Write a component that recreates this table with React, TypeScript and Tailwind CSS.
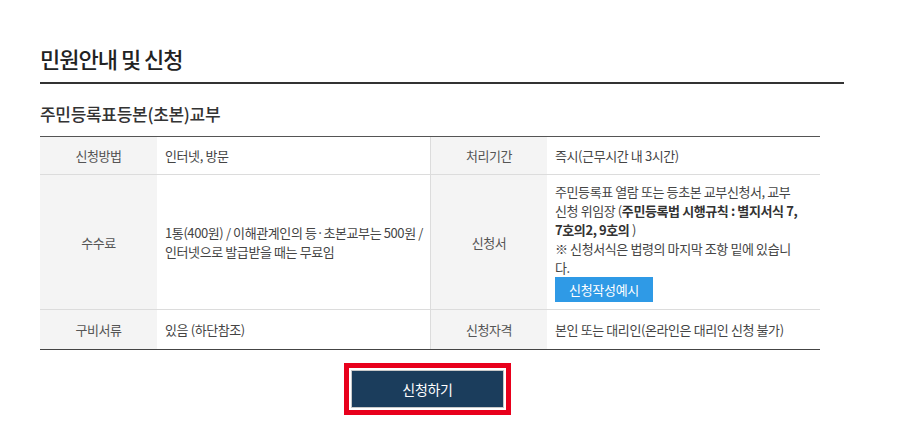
export default function App() {
  const font = { fontFamily: '"Noto Sans CJK KR", "Noto Sans", sans-serif' };
  return (
    <div className="w-[897px] h-[434px] bg-white text-[#444]" style={font}>
      <div className="ml-[40px] w-[804px] pt-[42px]">
        {/* section title */}
        <h2 className="text-[22px] leading-[32px] font-medium text-[#222] tracking-[-1px] pb-[8px] border-b-2 border-[#333]">
          민원안내 및 신청
        </h2>

        <h3 className="mt-[18px] text-[17px] leading-[24px] font-medium text-[#333] tracking-[-0.3px]">
          주민등록표등본(초본)교부
        </h3>

        {/* info table */}
        <div className="mt-[10px] w-[780px] border-t border-[#555] text-[13px] leading-[19px] tracking-[-0.4px]">
          <div className="grid grid-cols-[117px_273px_117px_273px] border-b border-[#dcdcdc]">
            <div className="bg-[#f4f4f4] flex items-center justify-center py-[9px] text-[#555]">신청방법</div>
            <div className="flex items-center px-2 py-[9px]">인터넷, 방문</div>
            <div className="bg-[#f4f4f4] border-l border-[#dcdcdc] flex items-center justify-center py-[9px] text-[#555]">처리기간</div>
            <div className="flex items-center px-2 py-[9px]">즉시(근무시간 내 3시간)</div>
          </div>

          <div className="grid grid-cols-[117px_273px_117px_273px] border-b border-[#dcdcdc]">
            <div className="bg-[#f4f4f4] flex items-center justify-center text-[#555]">수수료</div>
            <div className="flex items-center pl-2 pr-[4px]">
              <p>
                1통(400원) / 이해관계인의 등·초본교부는 500원 /<br />
                인터넷으로 발급받을 때는 무료임
              </p>
            </div>
            <div className="bg-[#f4f4f4] border-l border-[#dcdcdc] flex items-center justify-center text-[#555]">신청서</div>
            <div className="pl-2 pr-[4px] py-[7px]">
              <p>
                주민등록표 열람 또는 등초본 교부신청서, 교부
                <br />
                신청 위임장 (<b className="font-bold text-[#333]">주민등록법 시행규칙 : 별지서식 7,</b>
                <br />
                <b className="font-bold text-[#333]">7호의2, 9호의</b> )
              </p>
              <p>
                ※ 신청서식은 법령의 마지막 조항 밑에 있습니
                <br />
                다.
              </p>
              <button className="w-[98px] h-[25px] bg-[#2f9ae6] text-white text-[13px] tracking-[-0.3px]">
                신청작성예시
              </button>
            </div>
          </div>

          <div className="grid grid-cols-[117px_273px_117px_273px] border-b border-[#444]">
            <div className="bg-[#f4f4f4] flex items-center justify-center py-[10px] text-[#555]">구비서류</div>
            <div className="flex items-center px-2 py-[10px]">있음 (하단참조)</div>
            <div className="bg-[#f4f4f4] border-l border-[#dcdcdc] flex items-center justify-center py-[10px] text-[#555]">신청자격</div>
            <div className="flex items-center px-2 py-[10px]">본인 또는 대리인(온라인은 대리인 신청 불가)</div>
          </div>
        </div>

        {/* submit */}
        <div className="w-[780px] flex justify-center mt-[13px]">
          <div className="ml-[-5px] border-[5px] border-[#e8001c] p-[2px] bg-white">
            <button className="w-[153px] h-[38px] border border-[#c9c9c9] bg-[#1b3d5c] text-white text-[14px] tracking-[-0.3px]">
              신청하기
            </button>
          </div>
        </div>
      </div>
    </div>
  );
}
